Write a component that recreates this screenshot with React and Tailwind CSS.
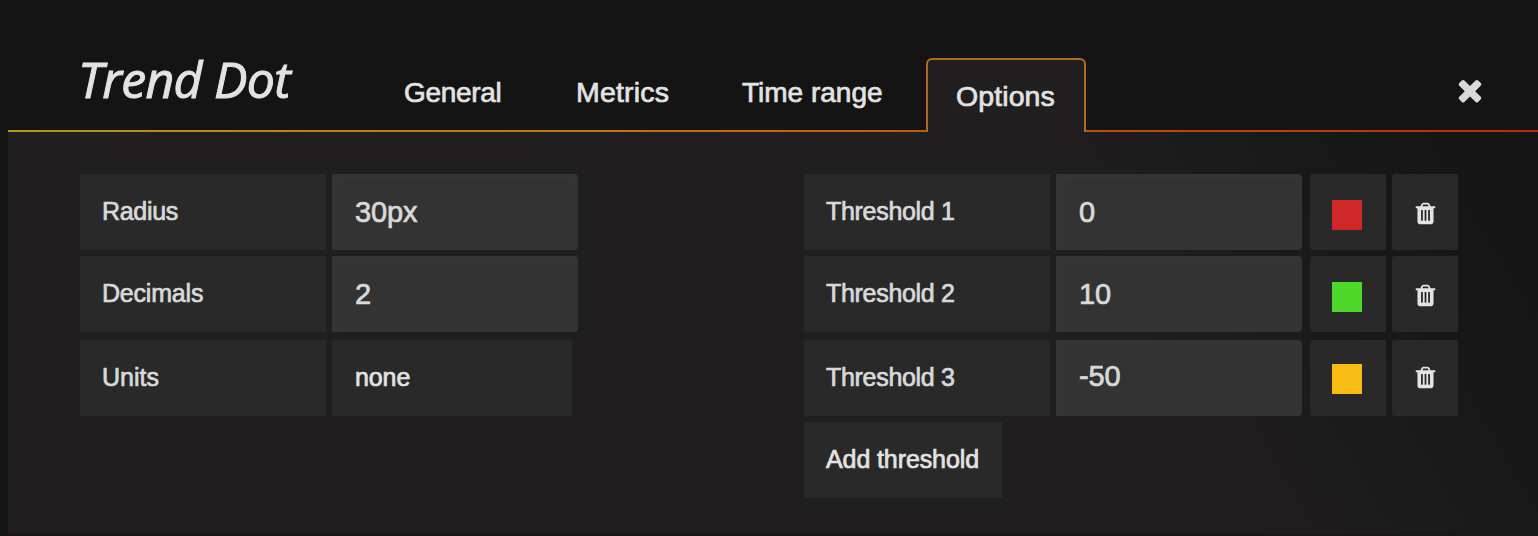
const TIMES =
  'M1490 1322q0 40-28 68l-136 136q-28 28-68 28t-68-28l-294-294-294 294q-28 28-68 28t-68-28l-136-136q-28-28-28-68t28-68l294-294-294-294q-28-28-28-68t28-68l136-136q28-28 68-28t68 28l294 294 294-294q28-28 68-28t68 28l136 136q28 28 28 68t-28 68l-294 294 294 294q28 28 28 68z';
const TRASH =
  'M704 1376v-704q0-14-9-23t-23-9h-64q-14 0-23 9t-9 23v704q0 14 9 23t23 9h64q14 0 23-9t9-23zm256 0v-704q0-14-9-23t-23-9h-64q-14 0-23 9t-9 23v704q0 14 9 23t23 9h64q14 0 23-9t9-23zm256 0v-704q0-14-9-23t-23-9h-64q-14 0-23 9t-9 23v704q0 14 9 23t23 9h64q14 0 23-9t9-23zm-544-992h448l-48-117q-7-9-17-11h-317q-10 2-17 11zm928 32v64q0 14-9 23t-23 9h-96v948q0 83-47 143.5t-113 60.5h-832q-66 0-113-58.5t-47-141.5v-952h-96q-14 0-23-9t-9-23v-64q0-14 9-23t23-9h309l70-167q15-37 54-63t79-26h320q40 0 79 26t54 63l70 167h309q14 0 23 9t9 23z';

const thresholds = [
  { name: 'Threshold 1', value: '0', color: 'bg-[#d02828]' },
  { name: 'Threshold 2', value: '10', color: 'bg-[#4fd82c]' },
  { name: 'Threshold 3', value: '-50', color: 'bg-[#f8bc14]', last: true },
];

function Label({ children, className = '' }) {
  return (
    <div className={`flex h-[76px] w-[246px] items-center rounded-l-[3px] bg-[#292929] pb-px pl-[22px] text-[25px] text-[#d8d9da] ${className}`}>
      {children}
    </div>
  );
}

function Field({ children, raised }) {
  return (
    <div className={`${raised ? 'pb-[3px]' : 'pt-px'} ml-1.5 flex h-[76px] w-[246px] items-center rounded-r-[4px] border-2 border-[#343434] bg-[#333333] pl-[21px] text-[29px] tracking-[-0.1px] text-[#d8d9da] shadow-[inset_2px_2px_8px_#383838]`}>
      {children}
    </div>
  );
}

export default function App() {
  return (
    <div className="flex h-[536px] w-[1538px] flex-col overflow-hidden bg-[#141414] pl-2 font-['Liberation_Sans',Arial,sans-serif] leading-none whitespace-nowrap [-webkit-text-stroke:0.7px_currentColor]">
      <header className="flex h-[132px] shrink-0 items-end border-b-2 [border-image:linear-gradient(to_right,#b8960a_0%,#c06f08_45%,#bd4c0c_72%,#b52c10_100%)_1] text-[28px] text-[#e3e3e3]">
        <h1 className="mb-[24px] ml-[70px] w-[326px] font-['Open_Sans',sans-serif] text-[50px] italic leading-[54px] tracking-[-0.7px] [-webkit-text-stroke:1px_currentColor]">
          Trend Dot
        </h1>
        <nav className="flex items-end">
          <span className="mb-[23px] w-[172px] tracking-[-0.3px]">General</span>
          <span className="mb-[24px] w-[166px] text-[28.5px] tracking-[0.2px]">Metrics</span>
          <span className="mb-[23px] w-[184px]">Time range</span>
          <span className="-mb-0.5 h-[74px] w-[160px] rounded-t-[6px] border-2 border-b-0 border-[#b06b20] bg-[#201e1f] pl-[28px] pt-[22px] text-[28.5px] tracking-[0.1px]">
            Options
          </span>
        </nav>
        <svg viewBox="0 0 1792 1792" className="mb-[23px] ml-[367px] size-[34px] fill-[#d8d9da]">
          <path d={TIMES} />
        </svg>
      </header>
      <main className="flex flex-1 items-start border-b-2 border-[#1c1618] bg-[linear-gradient(60deg,#201e1f_70%,#181717_90%,#151515_100%)] pl-[72px] pt-[42px]">
        <section className="w-[724px]">
          <div className="mb-1.5 flex">
            <Label className="tracking-[-0.3px]">Radius</Label>
            <Field>30px</Field>
          </div>
          <div className="mb-2 flex">
            <Label className="tracking-[-0.2px]">Decimals</Label>
            <Field>2</Field>
          </div>
          <div className="flex">
            <Label>Units</Label>
            <div className="ml-1.5 flex h-[76px] w-[240px] items-center rounded-l-[3px] bg-[#292929] pb-px pl-[23px] text-[25px] tracking-[-0.1px] text-[#e3e3e3]">
              none
            </div>
          </div>
        </section>
        <section>
          {thresholds.map((t, i) => (
            <div key={t.name} className={i === 1 ? 'mb-2 flex' : 'mb-1.5 flex'}>
              <Label className="tracking-[-0.3px]">{t.name}</Label>
              <Field raised={t.last}>{t.value}</Field>
              <div className="ml-2 flex h-[76px] w-[76px] justify-center rounded-l-[3px] bg-[#292929]">
                <div className={`${t.color} ${t.last ? 'mt-6' : 'mt-[26px]'} mr-0.5 size-[30px]`} />
              </div>
              <div className={`${t.last ? 'pb-px' : 'pt-0.5'} ml-1.5 flex h-[76px] w-[66px] items-center justify-center rounded-l-[3px] bg-[#292929]`}>
                <svg viewBox="0 0 1792 1792" className="size-[25px] fill-[#e3e3e3]">
                  <path d={TRASH} />
                </svg>
              </div>
            </div>
          ))}
          <div className="flex h-[76px] w-[198px] items-center rounded-l-[3px] bg-[#292929] pb-px pl-[22px] text-[25px] tracking-[-0.1px] text-[#e3e3e3]">
            Add threshold
          </div>
        </section>
      </main>
    </div>
  );
}
